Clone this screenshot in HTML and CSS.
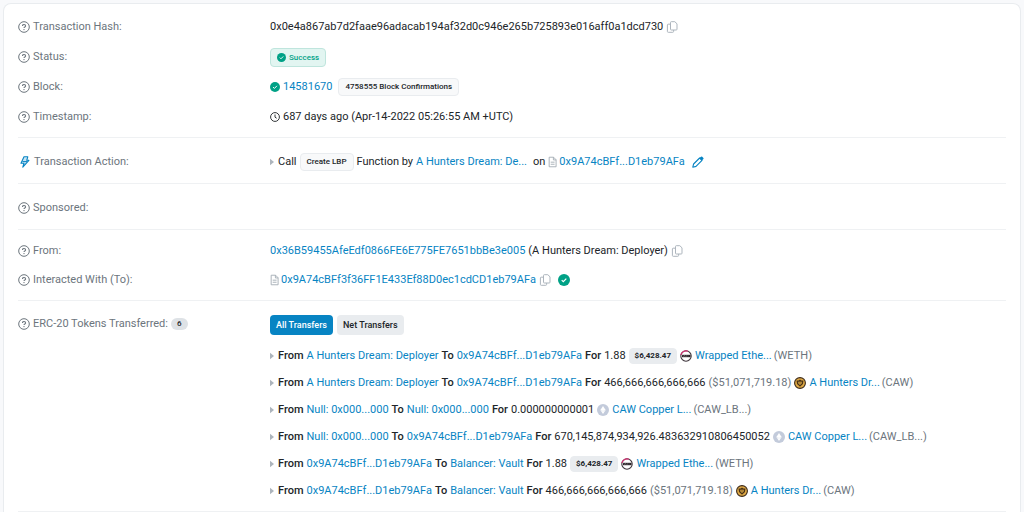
FILE: index.html
```html
<!DOCTYPE html>
<html lang="en">
<head>
<meta charset="utf-8">
<meta name="viewport" content="width=device-width, initial-scale=1">
<title>Transaction Details</title>
<link rel="stylesheet" href="styles.css">
</head>
<body>
<svg class="sprite" aria-hidden="true">
  <symbol id="help" viewBox="0 0 12 12"><circle cx="6" cy="6" r="5.300" fill="none" stroke="currentColor"/><path d="M4.500 4.900c0-2 3.100-1.900 3.100 0C7.600 6 6 5.900 6 7" fill="none" stroke="currentColor" stroke-width="1.100"/><circle cx="6" cy="8.600" r=".7" fill="currentColor"/></symbol>
  <symbol id="check" viewBox="0 0 12 12"><circle cx="6" cy="6" r="6" fill="#00a186"/><path d="M3.700 6.100l1.600 1.600 3-3.100" fill="none" stroke="#fff" stroke-width="1.200"/></symbol>
  <symbol id="copy" viewBox="0 0 12 12"><path d="M5.300.7h3.500L11 2.800v5.400q0 .8-.8.800H5.300q-.8 0-.8-.8V1.500q0-.8.8-.8z M4.500 3.200H2.200q-.8 0-.8.800v6.500q0 .8.800.800h4.600q.8 0 .8-.8V9" fill="none" stroke="currentColor" stroke-linejoin="round"/></symbol>
  <symbol id="clock" viewBox="0 0 12 12"><circle cx="6" cy="6" r="5.300" fill="none" stroke="currentColor" stroke-width="1.100"/><path d="M6 3v3.200l2 1.300" fill="none" stroke="currentColor" stroke-width="1.100"/></symbol>
  <symbol id="file" viewBox="0 0 10 12"><path d="M1.300.7h4.900L9 3.500v7.800H1.300z M6 .7v3h3 M3 6.200h4.300 M3 8.500h4.300" fill="none" stroke="currentColor" stroke-linejoin="round"/></symbol>
  <symbol id="bolt" viewBox="0 0 12 12"><path d="M6 .8h3.800L8.700 4.300h2.200L4.800 11.200l1.200-4H3z" fill="#c9e5f4" stroke="#0784c3" stroke-width="1.100" stroke-linejoin="round"/><path d="M4.500 5.600H9" stroke="#0784c3"/></symbol>
  <symbol id="pen" viewBox="0 0 12 12"><path d="M.8 11.200l.8-3.200 6-6 2.400 2.400-6 6z" fill="none" stroke="currentColor" stroke-width="1.100" stroke-linejoin="round"/><path d="M7.400 2.100L9 .7q.6-.5 1.200 0l1.200 1.200q.5.600 0 1.200L9.900 4.600z" fill="currentColor"/></symbol>
  <symbol id="caret" viewBox="0 0 4 8"><path d="M0 .8L4 4 0 7.200z" fill="currentColor"/></symbol>
  <symbol id="weth" viewBox="0 0 12 12"><circle cx="6" cy="6" r="5.200" fill="#fff" stroke="#3d343b" stroke-width="1.100"/><path d="M.9 5A5.200 5.200 0 0 1 8 1.200" fill="none" stroke="#d42c70" stroke-width="1.200"/><path d="M2 6h8.500" stroke="#292127" stroke-width="2.400"/><path d="M3 5.500l.8 1 .8-1 .8 1M6.500 5.500v1M8 5.500v1" fill="none" stroke="#ddd" stroke-width=".4"/></symbol>
  <symbol id="caw" viewBox="0 0 12 12"><circle cx="6" cy="6" r="5.400" fill="#e0aa45" stroke="#3b2918" stroke-width="1.100"/><path d="M2.500 3.500L4.500 3.600 6 2.400l1.500 1.200 2-.1L9 7 6 9.800 3 7z" fill="#4a3216"/><path d="M4.200 4.700h3.600L7.500 6.500 6 8 4.500 6.500z" fill="#e6b34a"/><circle cx="6" cy="5.900" r=".7" fill="#4a3216"/></symbol>
  <symbol id="token" viewBox="0 0 12 12"><circle cx="6" cy="6" r="6" fill="#c3cbdb"/><path d="M6 2l2.600 4L6 10 3.400 6z" fill="#fff"/><path d="M3.400 6L6 7.300 8.600 6" fill="none" stroke="#e1e6ee" stroke-width=".6"/></symbol>
</svg>
<main class="card">
  <section class="section">
    <div class="row">
      <div class="label"><svg class="icon"><use href="#help"/></svg>Transaction Hash:</div>
      <div class="value"><span>0x0e4a867ab7d2faae96adacab194af32d0c946e265b725893e016aff0a1dcd730</span><button class="icon-button" aria-label="Copy hash"><svg class="icon"><use href="#copy"/></svg></button></div>
    </div>
    <div class="row">
      <div class="label"><svg class="icon"><use href="#help"/></svg>Status:</div>
      <div class="value"><span class="badge success"><svg class="icon small"><use href="#check"/></svg>Success</span></div>
    </div>
    <div class="row">
      <div class="label"><svg class="icon"><use href="#help"/></svg>Block:</div>
      <div class="value"><svg class="icon mid"><use href="#check"/></svg><a href="#">14581670</a><span class="badge spaced">4758555 Block Confirmations</span></div>
    </div>
    <div class="row">
      <div class="label"><svg class="icon"><use href="#help"/></svg>Timestamp:</div>
      <div class="value"><svg class="icon mid"><use href="#clock"/></svg>687 days ago (Apr-14-2022 05:26:55 AM +UTC)</div>
    </div>
  </section>
  <section class="section single">
    <div class="row">
      <div class="label action"><svg class="icon"><use href="#bolt"/></svg>Transaction Action:</div>
      <div class="value"><svg class="caret"><use href="#caret"/></svg><span>Call</span><span class="badge">Create LBP</span><span>Function by</span><a href="#">A Hunters Dream: De...</a><span class="on">on</span><svg class="icon file"><use href="#file"/></svg><a href="#">0x9A74cBFf...D1eb79AFa</a><button class="icon-button edit" aria-label="Edit note"><svg class="icon"><use href="#pen"/></svg></button></div>
    </div>
  </section>
  <section class="section single">
    <div class="row">
      <div class="label"><svg class="icon"><use href="#help"/></svg>Sponsored:</div>
    </div>
  </section>
  <section class="section parties">
    <div class="row">
      <div class="label"><svg class="icon"><use href="#help"/></svg>From:</div>
      <div class="value"><a href="#">0x36B59455AfeEdf0866FE6E775FE7651bbBe3e005</a><span>(A Hunters Dream: Deployer)</span><button class="icon-button" aria-label="Copy sender"><svg class="icon"><use href="#copy"/></svg></button></div>
    </div>
    <div class="row">
      <div class="label"><svg class="icon"><use href="#help"/></svg>Interacted With (To):</div>
      <div class="value"><svg class="icon file"><use href="#file"/></svg><a href="#">0x9A74cBFf3f36FF1E433Ef88D0ec1cdCD1eb79AFa</a><button class="icon-button" aria-label="Copy recipient"><svg class="icon"><use href="#copy"/></svg></button><svg class="icon verified"><use href="#check"/></svg></div>
    </div>
  </section>
  <section class="section tokens">
    <div class="row top">
      <div class="label"><svg class="icon"><use href="#help"/></svg>ERC-20 Tokens Transferred:<span class="count">6</span></div>
      <div>
        <div class="tabs"><button class="tab active">All Transfers</button><button class="tab">Net Transfers</button></div>
        <ul class="transfers">
          <li class="transfer"><svg class="caret"><use href="#caret"/></svg><b>From</b><a href="#">A Hunters Dream: Deployer</a><b>To</b><a href="#">0x9A74cBFf...D1eb79AFa</a><b>For</b><span>1.88</span><span class="badge price">$6,428.47</span><svg class="icon coin"><use href="#weth"/></svg><a href="#">Wrapped Ethe...</a><span class="muted symbol">(WETH)</span></li>
          <li class="transfer"><svg class="caret"><use href="#caret"/></svg><b>From</b><a href="#">A Hunters Dream: Deployer</a><b>To</b><a href="#">0x9A74cBFf...D1eb79AFa</a><b>For</b><span>466,666,666,666,666</span><span class="muted">($51,071,719.18)</span><svg class="icon coin"><use href="#caw"/></svg><a href="#">A Hunters Dr...</a><span class="muted symbol">(CAW)</span></li>
          <li class="transfer"><svg class="caret"><use href="#caret"/></svg><b>From</b><a href="#">Null: 0x000...000</a><b>To</b><a href="#">Null: 0x000...000</a><b>For</b><span>0.000000000001</span><svg class="icon coin"><use href="#token"/></svg><a href="#">CAW Copper L...</a><span class="muted symbol">(CAW_LB...)</span></li>
          <li class="transfer"><svg class="caret"><use href="#caret"/></svg><b>From</b><a href="#">Null: 0x000...000</a><b>To</b><a href="#">0x9A74cBFf...D1eb79AFa</a><b>For</b><span>670,145,874,934,926.483632910806450052</span><svg class="icon coin"><use href="#token"/></svg><a href="#">CAW Copper L...</a><span class="muted symbol">(CAW_LB...)</span></li>
          <li class="transfer"><svg class="caret"><use href="#caret"/></svg><b>From</b><a href="#">0x9A74cBFf...D1eb79AFa</a><b>To</b><a href="#">Balancer: Vault</a><b>For</b><span>1.88</span><span class="badge price">$6,428.47</span><svg class="icon coin"><use href="#weth"/></svg><a href="#">Wrapped Ethe...</a><span class="muted symbol">(WETH)</span></li>
          <li class="transfer"><svg class="caret"><use href="#caret"/></svg><b>From</b><a href="#">0x9A74cBFf...D1eb79AFa</a><b>To</b><a href="#">Balancer: Vault</a><b>For</b><span>466,666,666,666,666</span><span class="muted">($51,071,719.18)</span><svg class="icon coin"><use href="#caw"/></svg><a href="#">A Hunters Dr...</a><span class="muted symbol">(CAW)</span></li>
        </ul>
      </div>
    </div>
  </section>
</main>
</body>
</html>
```
FILE: styles.css
```css
* { box-sizing: border-box; }
body {
  margin: 0;
  padding: 3px 3px 0;
  background: #f8f9fb;
  color: #212529;
  font: 11px/16px Roboto, "Liberation Sans", sans-serif;
}
.sprite { position: absolute; width: 0; height: 0; }
.card {
  padding: 0 14px;
  background: #fff;
  border: 1px solid #e9ecef;
  border-bottom: 0;
  border-radius: 8px 8px 0 0;
}
.section { padding: 8px 0 5px; border-bottom: 1px solid #eff1f3; }
.section.single { padding: 9px 0 6px; }
.section.parties { padding: 6px 0; }
.section.tokens { padding: 14px 0 7px; }
.row {
  display: grid;
  grid-template-columns: 252px minmax(0, 1fr);
  align-items: center;
  min-height: 30px;
}
.parties .row { min-height: 29px; }
.row.top { align-items: start; }
.label, .value, .transfer { display: flex; align-items: center; white-space: nowrap; }
.top .label { line-height: 18px; }
.label { gap: 3px; color: #6c757d; }
.label.action { gap: 4px; }
.value { gap: 3px; }
a { color: #0784c3; text-decoration: none; }
.icon { width: 12px; height: 12px; flex: none; display: block; }
.icon.small { width: 9px; height: 9px; }
.icon.mid { width: 10px; height: 10px; }
.icon.file { width: 9px; color: #a3abb3; margin-right: -1px; }
.caret { width: 4px; height: 8px; flex: none; color: #adb5bd; margin-right: 1px; }
.icon-button { padding: 0; border: 0; background: none; color: #adb5bd; }
.icon-button.edit { margin-left: 4px; color: #0784c3; }
.verified { margin-left: 4px; }
.on { margin-left: 3px; }
.badge {
  display: inline-flex;
  align-items: center;
  gap: 3px;
  padding: 0 6px;
  border: 1px solid #e9ecef;
  border-radius: 4px;
  background: #f8f9fa;
  font-size: 8px;
  font-weight: 500;
}
.badge.success { background: #e2f5f1; border-color: #bfe5dd; color: #00a186; line-height: 17px; }
.badge.spaced { margin-left: 3px; }
.badge.price { background: #e9ecef; line-height: 14px; padding: 0 5px; font-weight: 700; }
.count {
  padding: 0 6px;
  border-radius: 6px;
  background: #dee2e6;
  color: #212529;
  font-size: 8px;
  font-weight: 500;
  line-height: 12px;
}
.tabs { display: flex; gap: 4px; }
.tab {
  padding: 0 6px;
  border: 0;
  border-radius: 4px;
  background: #e9ecef;
  color: #212529;
  font: 500 9px/20px Roboto, "Liberation Sans", sans-serif;
}
.tab.active { background: #0784c3; color: #fff; }
.transfers { margin: 7px 0 0; padding: 0; list-style: none; }
.transfer { gap: 3px; height: 27px; }
.transfer b { font-weight: 500; }
.transfer .symbol { margin-left: -1px; }
.muted { color: #6c757d; }
```
